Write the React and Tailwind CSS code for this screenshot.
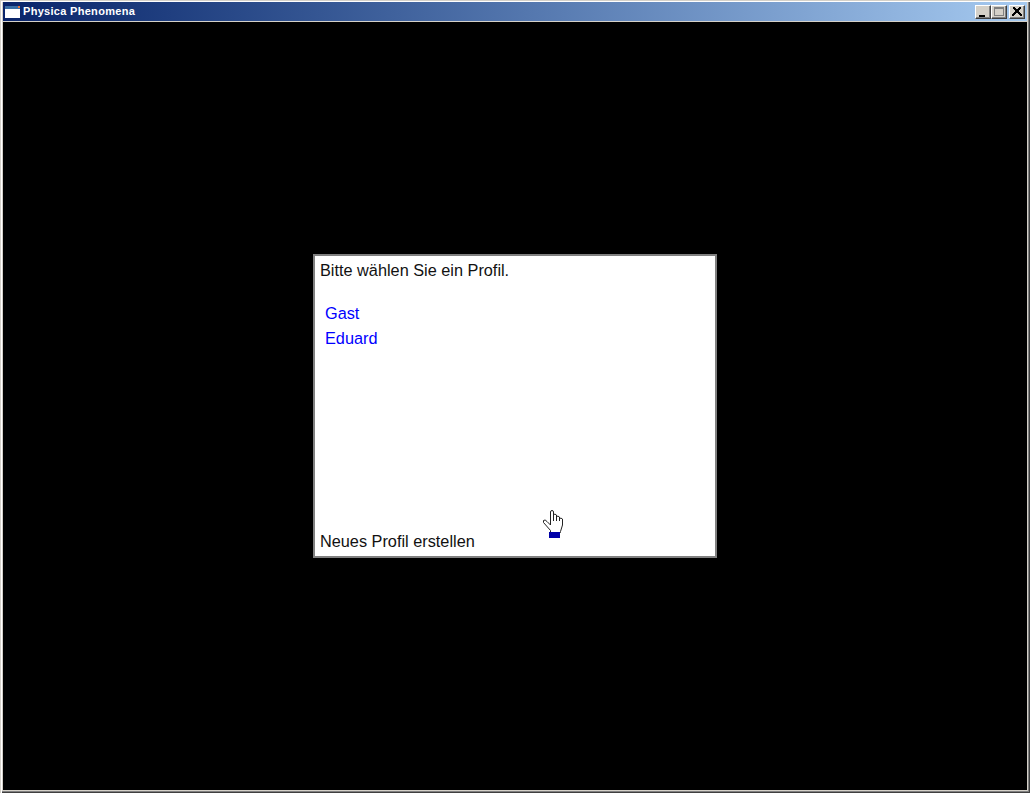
import React from 'react';

const Cursor = () => (
  <svg className="absolute left-[227px] top-[253px]" width="22" height="31" viewBox="0 0 22 31">
    <path d="M8.5 16V3Q8.5 1.5 10 1.5T11.5 3V5.5Q13 4.5 14.5 6V7.5Q16 6.5 17.5 8V9.5Q19 8.5 20.5 10V16L18.5 22.5V23.5H8.5V21.5L1.5 13.5V11.5Q3 10 5 12.5Z" fill="#fff" stroke="#222" strokeWidth="1" />
    <path d="M11.5 5V12M14.5 6V12M17.5 8V12" fill="none" stroke="#222" strokeWidth="1" />
    <rect x="7" y="23" width="11" height="6" fill="#0000a8" />
  </svg>
);

const WindowButton = ({ children, className = '' }) => (
  <div className={`relative h-[14px] w-[16px] bg-[#d4d0c8] border border-t-white border-l-white border-r-[#404040] border-b-[#404040] shadow-[inset_-1px_-1px_0_#808080] ${className}`}>
    {children}
  </div>
);

export default function App() {
  return (
    <div className="h-[793px] w-[1030px] flex flex-col bg-[#d4d0c8] px-[3px] pt-[2px] pb-[3px] overflow-hidden font-['Liberation_Sans',sans-serif] shadow-[inset_1px_1px_0_#d4d0c8,inset_2px_2px_0_#fff,inset_-1px_-1px_0_#404040,inset_-2px_-2px_0_#808080]">
      {/* Title bar */}
      <div className="flex h-[19px] shrink-0 items-center justify-between bg-gradient-to-r from-[#0a246a] to-[#a6caf0] pl-[2px] pr-[2px]">
        <div className="flex items-center gap-[3px]">
          <div className="relative h-[12px] w-[15px] border-t-[3px] border-[#3a6ea5] bg-white">
            <div className="absolute right-0 top-[-3px] h-[2px] w-[2px] bg-[#e8743b]" />
          </div>
          <span className="text-[11px] font-bold tracking-[0.3px] text-white">Physica Phenomena</span>
        </div>
        <div className="flex items-center">
          <WindowButton>
            <div className="absolute left-[3px] bottom-[1px] h-[2px] w-[6px] bg-black" />
          </WindowButton>
          <WindowButton>
            <div className="absolute left-[2px] top-[1px] h-[9px] w-[10px] border border-t-2 border-[#808080]" />
          </WindowButton>
          <WindowButton className="ml-[2px] flex items-center justify-center">
            <svg width="10" height="9" viewBox="0 0 10 9" shapeRendering="crispEdges">
              <path d="M1 0.5L9 8.5M2 0.5L10 8.5M9 0.5L1 8.5M8 0.5L0 8.5" stroke="#000" fill="none" />
            </svg>
          </WindowButton>
        </div>
      </div>

      {/* Client area */}
      <div className="mt-px flex flex-1 items-center justify-center bg-black">
        <div className="relative flex h-[304px] w-[404px] flex-col justify-between border-2 border-[#808080] bg-white px-[5px] pt-[5px] pb-[6px] text-[16.3px] leading-[18px] text-[#111]">
          <div>
            <p>Bitte wählen Sie ein Profil.</p>
            <ul className="mt-[25px] ml-[5px] flex flex-col gap-[7px] text-[#0000ff]">
              <li>Gast</li>
              <li>Eduard</li>
            </ul>
          </div>
          <p>Neues Profil erstellen</p>
          <Cursor />
        </div>
      </div>
    </div>
  );
}
